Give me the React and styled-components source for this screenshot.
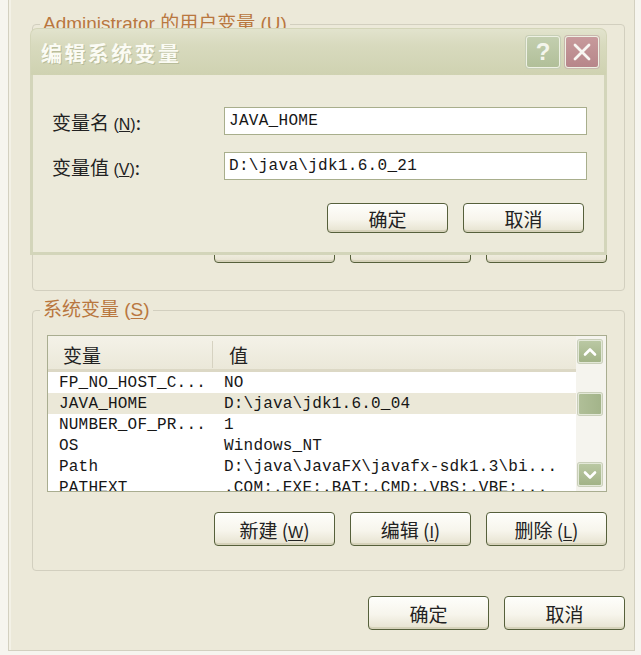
import React from "react";
import styled, { createGlobalStyle } from "styled-components";

const GlobalStyle = createGlobalStyle`
  html, body {
    margin: 0;
    padding: 0;
    background: #f6f5ef;
  }
  body {
    font-family: "Liberation Sans", "Noto Sans CJK SC", sans-serif;
    color: #222;
  }
`;

const Screen = styled.div`
  position: relative;
  width: 641px;
  height: 655px;
  overflow: hidden;
  background: #f6f5ef;
`;

const Page = styled.div`
  box-sizing: border-box;
  margin-left: 8px;
  width: 627px;
  height: 651px;
  padding: 13px 9px 0 23px;
  background: #ece9d9;
  border: 1px solid #d3d0c0;
  border-top: none;
  box-shadow: inset 2px 0 0 #f3f1e6;
  display: flex;
  flex-direction: column;
`;

const Group = styled.fieldset`
  box-sizing: border-box;
  margin: ${(p) => p.$mt || 0}px 0 0;
  min-width: 0;
  height: ${(p) => p.$h}px;
  padding: 0 17px 0 14px;
  border: 1px solid #d2cfbf;
  border-radius: 4px;
`;

const Legend = styled.legend`
  padding: 0 3px;
  margin-left: -7px;
  font-family: "Liberation Sans", "Noto Sans CJK SC", sans-serif;
  font-size: 19px;
  line-height: 22px;
  color: #b9773f;

  u {
    text-decoration-thickness: 1px;
    text-underline-offset: 2px;
  }
`;

const ListBox = styled.div`
  box-sizing: border-box;
  margin-top: ${(p) => p.$mt}px;
  height: ${(p) => p.$h}px;
  border: 1px solid #a9ad90;
  background: #fff;
  display: flex;
  overflow: hidden;
`;

const ListBody = styled.div`
  flex: 1;
  min-width: 0;
`;

const Header = styled.div`
  box-sizing: border-box;
  display: grid;
  grid-template-columns: 164px 1fr;
  height: 36px;
  background: linear-gradient(#f4f2e8, #ebe8d9);
  border-bottom: 3px solid #dcd8c5;
`;

const HeaderCell = styled.div`
  display: flex;
  align-items: center;
  padding-left: ${(p) => (p.$divider ? 16 : 15)}px;
  margin: ${(p) => (p.$divider ? "5px 0" : "0")};
  border-left: ${(p) => (p.$divider ? "1px solid #d6d2c1" : "none")};
  font-family: "Noto Sans CJK SC", sans-serif;
  font-size: 19px;
  color: #222;
`;

const Row = styled.div`
  display: grid;
  grid-template-columns: 164px 1fr;
  height: 21px;
  align-items: center;
  background: ${(p) => (p.$selected ? "#ebe8d8" : "transparent")};
`;

const Cell = styled.div`
  padding-left: ${(p) => (p.$second ? 12 : 11)}px;
  font-family: "Liberation Mono", monospace;
  font-size: 16px;
  letter-spacing: 0.2px;
  color: #161616;
  white-space: nowrap;
  overflow: hidden;
`;

const ScrollBar = styled.div`
  box-sizing: border-box;
  width: 30px;
  padding: 4px 4px 5px 2px;
  background: #f5f4ee;
  display: flex;
  flex-direction: column;
`;

const ScrollButton = styled.div`
  box-sizing: border-box;
  width: 24px;
  height: 23px;
  margin-top: ${(p) => (p.$bottom ? "auto" : "0")};
  border: 1px solid #e3e8d8;
  border-radius: 2px;
  background: linear-gradient(#bac8a3, #a2b387);
  box-shadow: 0 0 0 1px #c9cfb9;
  display: flex;
  align-items: center;
  justify-content: center;
`;

const Thumb = styled.div`
  box-sizing: border-box;
  width: 24px;
  height: 22px;
  border: 1px solid #e3e8d8;
  border-radius: 2px;
  background: linear-gradient(90deg, #b0bf98, #a3b48a);
  box-shadow: 0 0 0 1px #c9cfb9;
`;

const ButtonRow = styled.div`
  display: flex;
  justify-content: flex-end;
  gap: 15px;
  margin-top: ${(p) => p.$mt}px;
  padding-right: ${(p) => p.$pr || 0}px;
`;

const Button = styled.button`
  box-sizing: border-box;
  width: 121px;
  height: ${(p) => p.$h || 34}px;
  padding: 0;
  border: 1px solid #56603b;
  border-radius: 4px;
  background: linear-gradient(#fefefb 0%, #f7f5ec 55%, #e6e2cf 100%);
  box-shadow: inset 0 -2px 0 #d6d2ba, inset 0 1px 0 #fff;
  font-family: "Noto Sans CJK SC", "Liberation Sans", sans-serif;
  font-size: 19px;
  color: #222;

  u {
    font-family: "Liberation Sans", sans-serif;
    font-size: 16px;
    text-underline-offset: 2px;
  }
`;

const Dialog = styled.div`
  position: absolute;
  left: 30px;
  top: 28px;
  width: 577px;
  height: 227px;
  display: flex;
  flex-direction: column;
`;

const TitleBar = styled.div`
  box-sizing: border-box;
  height: 47px;
  padding: 0 7px 0 10px;
  display: flex;
  align-items: center;
  justify-content: space-between;
  border-radius: 7px 7px 0 0;
  border: 1px solid #d3d5b8;
  border-bottom: none;
  background: linear-gradient(#e2e3cd 0%, #d8dabe 35%, #cfd2b1 100%);
`;

const Title = styled.span`
  font-family: "Noto Sans CJK SC", sans-serif;
  font-weight: 700;
  font-size: 21px;
  letter-spacing: 2.4px;
  color: #fbfbf4;
  text-shadow: 1px 1px 0 rgba(150, 156, 118, 0.45);
`;

const CaptionButtons = styled.div`
  display: flex;
  gap: 5px;
`;

const CaptionButton = styled.div`
  box-sizing: border-box;
  width: 34px;
  height: 32px;
  border: 1px solid #eef1e4;
  border-radius: 3px;
  background: ${(p) =>
    p.$close
      ? "linear-gradient(#c79a9c, #b7868a)"
      : "linear-gradient(#c3ceaf, #b1bf99)"};
  box-shadow: 0 0 0 1px ${(p) => (p.$close ? "#c9b7ae" : "#c6ceb6")};
  display: flex;
  align-items: center;
  justify-content: center;
  font-family: "Liberation Sans", sans-serif;
  font-weight: 700;
  font-size: 24px;
  color: #f4f5ec;
`;

const DialogBody = styled.div`
  flex: 1;
  box-sizing: border-box;
  padding: 32px 17px 0 19px;
  background: #eceada;
  border: 3px solid #d3d5ba;
  border-top: none;
`;

const Fields = styled.div`
  display: grid;
  grid-template-columns: 172px 1fr;
  row-gap: 17px;
  align-items: center;
`;

const Label = styled.label`
  font-family: "Noto Sans CJK SC", "Liberation Sans", sans-serif;
  font-size: 19px;
  color: #222;

  span {
    font-family: "Liberation Sans", sans-serif;
    font-size: 16px;
  }
`;

const Input = styled.input`
  box-sizing: border-box;
  height: 28px;
  padding: 0 4px;
  border: 1px solid #a8ae8c;
  background: #fff;
  font-family: "Liberation Mono", monospace;
  font-size: 16px;
  letter-spacing: 0.3px;
  color: #161616;
  outline: none;
`;

const Chevron = ({ down }) => (
  <svg width="14" height="10" viewBox="0 0 14 10">
    <polyline
      points={down ? "2,2.5 7,7.5 12,2.5" : "2,7.5 7,2.5 12,7.5"}
      fill="none"
      stroke="#fff"
      strokeWidth="2.6"
      strokeLinecap="round"
      strokeLinejoin="round"
    />
  </svg>
);

const Key = ({ k }) => (
  <span>
    {" ("}
    <u>{k}</u>
    {")"}
  </span>
);

const systemVars = [
  ["FP_NO_HOST_C...", "NO"],
  ["JAVA_HOME", "D:\\java\\jdk1.6.0_04"],
  ["NUMBER_OF_PR...", "1"],
  ["OS", "Windows_NT"],
  ["Path", "D:\\java\\JavaFX\\javafx-sdk1.3\\bi..."],
  ["PATHEXT", ".COM;.EXE;.BAT;.CMD;.VBS;.VBE;..."],
];

function VarList({ rows, selected, mt, h, thumbTop }) {
  return (
    <ListBox $mt={mt} $h={h}>
      <ListBody>
        {rows.length > 0 && (
          <Header>
            <HeaderCell>变量</HeaderCell>
            <HeaderCell $divider>值</HeaderCell>
          </Header>
        )}
        {rows.map(([name, value]) => (
          <Row key={name} $selected={name === selected}>
            <Cell>{name}</Cell>
            <Cell $second>{value}</Cell>
          </Row>
        ))}
      </ListBody>
      <ScrollBar>
        <ScrollButton>
          <Chevron />
        </ScrollButton>
        {thumbTop != null && <Thumb style={{ marginTop: thumbTop }} />}
        <ScrollButton $bottom>
          <Chevron down />
        </ScrollButton>
      </ScrollBar>
    </ListBox>
  );
}

function EditButtons({ mt, labels = true }) {
  return (
    <ButtonRow $mt={mt}>
      <Button>
        {labels && (
          <>
            新建
            <Key k="W" />
          </>
        )}
      </Button>
      <Button>
        {labels && (
          <>
            编辑
            <Key k="I" />
          </>
        )}
      </Button>
      <Button>
        {labels && (
          <>
            删除
            <Key k="L" />
          </>
        )}
      </Button>
    </ButtonRow>
  );
}

export default function App() {
  return (
    <Screen>
      <GlobalStyle />
      <Page>
        {/* user variables, mostly under the edit dialog */}
        <Group $h={278}>
          <Legend>
            Administrator 的用户变量 (<u>U</u>)
          </Legend>
          <VarList rows={[]} mt={10} h={165} />
          <EditButtons mt={19} labels={false} />
        </Group>

        <Group $mt={8} $h={272}>
          <Legend>
            系统变量 (<u>S</u>)
          </Legend>
          <VarList
            rows={systemVars}
            selected="JAVA_HOME"
            mt={14}
            h={157}
            thumbTop={30}
          />
          <EditButtons mt={20} />
        </Group>

        <ButtonRow $mt={25}>
          <Button>确定</Button>
          <Button>取消</Button>
        </ButtonRow>
      </Page>

      <Dialog>
        <TitleBar>
          <Title>编辑系统变量</Title>
          <CaptionButtons>
            <CaptionButton>?</CaptionButton>
            <CaptionButton $close>
              <svg width="20" height="20" viewBox="0 0 20 20">
                <path
                  d="M3 3 L17 17 M17 3 L3 17"
                  stroke="#f8f6f2"
                  strokeWidth="2.8"
                  strokeLinecap="round"
                />
              </svg>
            </CaptionButton>
          </CaptionButtons>
        </TitleBar>
        <DialogBody>
          <Fields>
            <Label htmlFor="var-name">
              变量名<Key k="N" />:
            </Label>
            <Input id="var-name" defaultValue="JAVA_HOME" />
            <Label htmlFor="var-value">
              变量值<Key k="V" />:
            </Label>
            <Input id="var-value" defaultValue="D:\java\jdk1.6.0_21" />
          </Fields>
          <ButtonRow $mt={23} $pr={3}>
            <Button $h={30}>确定</Button>
            <Button $h={30}>取消</Button>
          </ButtonRow>
        </DialogBody>
      </Dialog>
    </Screen>
  );
}
